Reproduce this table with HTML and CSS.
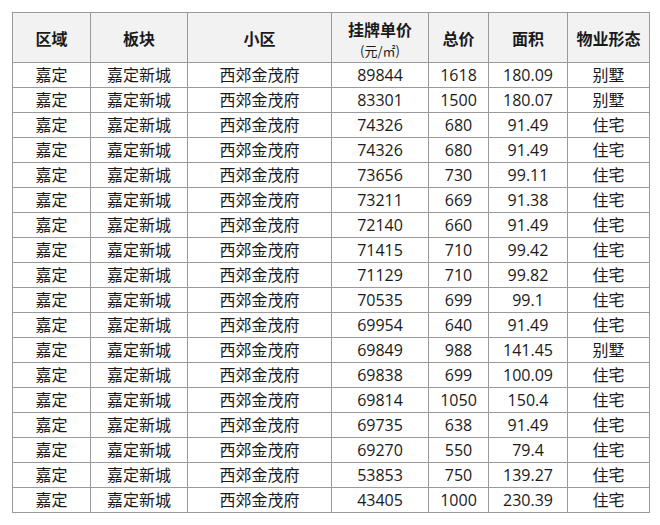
FILE: index.html
```html
<!DOCTYPE html>
<html lang="zh">
<head>
<meta charset="utf-8">
<link rel="stylesheet" href="styles.css">
</head>
<body>
<div class="page">
<table class="grid">
<colgroup>
<col class="c1"><col class="c2"><col class="c3"><col class="c4"><col class="c5"><col class="c6"><col class="c7">
</colgroup>
<thead>
<tr>
<th>区域</th><th>板块</th><th>小区</th>
<th class="two"><span class="l1">挂牌单价</span><span class="l2">(元/㎡)</span></th>
<th>总价</th><th>面积</th><th>物业形态</th>
</tr>
</thead>
<tbody>
<tr><td>嘉定</td><td>嘉定新城</td><td>西郊金茂府</td><td>89844</td><td>1618</td><td>180.09</td><td>别墅</td></tr>
<tr><td>嘉定</td><td>嘉定新城</td><td>西郊金茂府</td><td>83301</td><td>1500</td><td>180.07</td><td>别墅</td></tr>
<tr><td>嘉定</td><td>嘉定新城</td><td>西郊金茂府</td><td>74326</td><td>680</td><td>91.49</td><td>住宅</td></tr>
<tr><td>嘉定</td><td>嘉定新城</td><td>西郊金茂府</td><td>74326</td><td>680</td><td>91.49</td><td>住宅</td></tr>
<tr><td>嘉定</td><td>嘉定新城</td><td>西郊金茂府</td><td>73656</td><td>730</td><td>99.11</td><td>住宅</td></tr>
<tr><td>嘉定</td><td>嘉定新城</td><td>西郊金茂府</td><td>73211</td><td>669</td><td>91.38</td><td>住宅</td></tr>
<tr><td>嘉定</td><td>嘉定新城</td><td>西郊金茂府</td><td>72140</td><td>660</td><td>91.49</td><td>住宅</td></tr>
<tr><td>嘉定</td><td>嘉定新城</td><td>西郊金茂府</td><td>71415</td><td>710</td><td>99.42</td><td>住宅</td></tr>
<tr><td>嘉定</td><td>嘉定新城</td><td>西郊金茂府</td><td>71129</td><td>710</td><td>99.82</td><td>住宅</td></tr>
<tr><td>嘉定</td><td>嘉定新城</td><td>西郊金茂府</td><td>70535</td><td>699</td><td>99.1</td><td>住宅</td></tr>
<tr><td>嘉定</td><td>嘉定新城</td><td>西郊金茂府</td><td>69954</td><td>640</td><td>91.49</td><td>住宅</td></tr>
<tr><td>嘉定</td><td>嘉定新城</td><td>西郊金茂府</td><td>69849</td><td>988</td><td>141.45</td><td>别墅</td></tr>
<tr><td>嘉定</td><td>嘉定新城</td><td>西郊金茂府</td><td>69838</td><td>699</td><td>100.09</td><td>住宅</td></tr>
<tr><td>嘉定</td><td>嘉定新城</td><td>西郊金茂府</td><td>69814</td><td>1050</td><td>150.4</td><td>住宅</td></tr>
<tr><td>嘉定</td><td>嘉定新城</td><td>西郊金茂府</td><td>69735</td><td>638</td><td>91.49</td><td>住宅</td></tr>
<tr><td>嘉定</td><td>嘉定新城</td><td>西郊金茂府</td><td>69270</td><td>550</td><td>79.4</td><td>住宅</td></tr>
<tr><td>嘉定</td><td>嘉定新城</td><td>西郊金茂府</td><td>53853</td><td>750</td><td>139.27</td><td>住宅</td></tr>
<tr><td>嘉定</td><td>嘉定新城</td><td>西郊金茂府</td><td>43405</td><td>1000</td><td>230.39</td><td>住宅</td></tr>
</tbody>
</table>
</div>
</body>
</html>
```

FILE: styles.css
```css
html, body {
  margin: 0;
  padding: 0;
  background: #ffffff;
}

.page {
  padding: 12px 0 0 12px;
}

.grid {
  border-collapse: collapse;
  table-layout: fixed;
  width: 637px;
  font-family: "Open Sans", "Noto Sans CJK SC", sans-serif;
  color: #1a1a1a;
}

.c1 { width: 78px; }
.c2 { width: 97px; }
.c3 { width: 144px; }
.c4 { width: 97px; }
.c5 { width: 60px; }
.c6 { width: 79px; }
.c7 { width: 82px; }

.grid th,
.grid td {
  border: 1px solid #9a9a9a;
  text-align: center;
  vertical-align: middle;
  padding: 0;
  white-space: nowrap;
  overflow: hidden;
}

.grid th {
  height: 49px;
  background: #f2f2f2;
  font-family: "Noto Sans CJK SC", sans-serif;
  font-weight: 700;
  font-size: 16px;
  line-height: 20px;
}

.grid th.two {
  vertical-align: top;
  padding-top: 5px;
  height: 44px;
}

.grid td {
  height: 24px;
  font-size: 16px;
  line-height: 22px;
}

.two .l1,
.two .l2 {
  display: block;
}

.two .l1 {
  line-height: 22px;
}

.two .l2 {
  font-size: 13px;
  font-weight: 400;
  line-height: 22px;
}
```
